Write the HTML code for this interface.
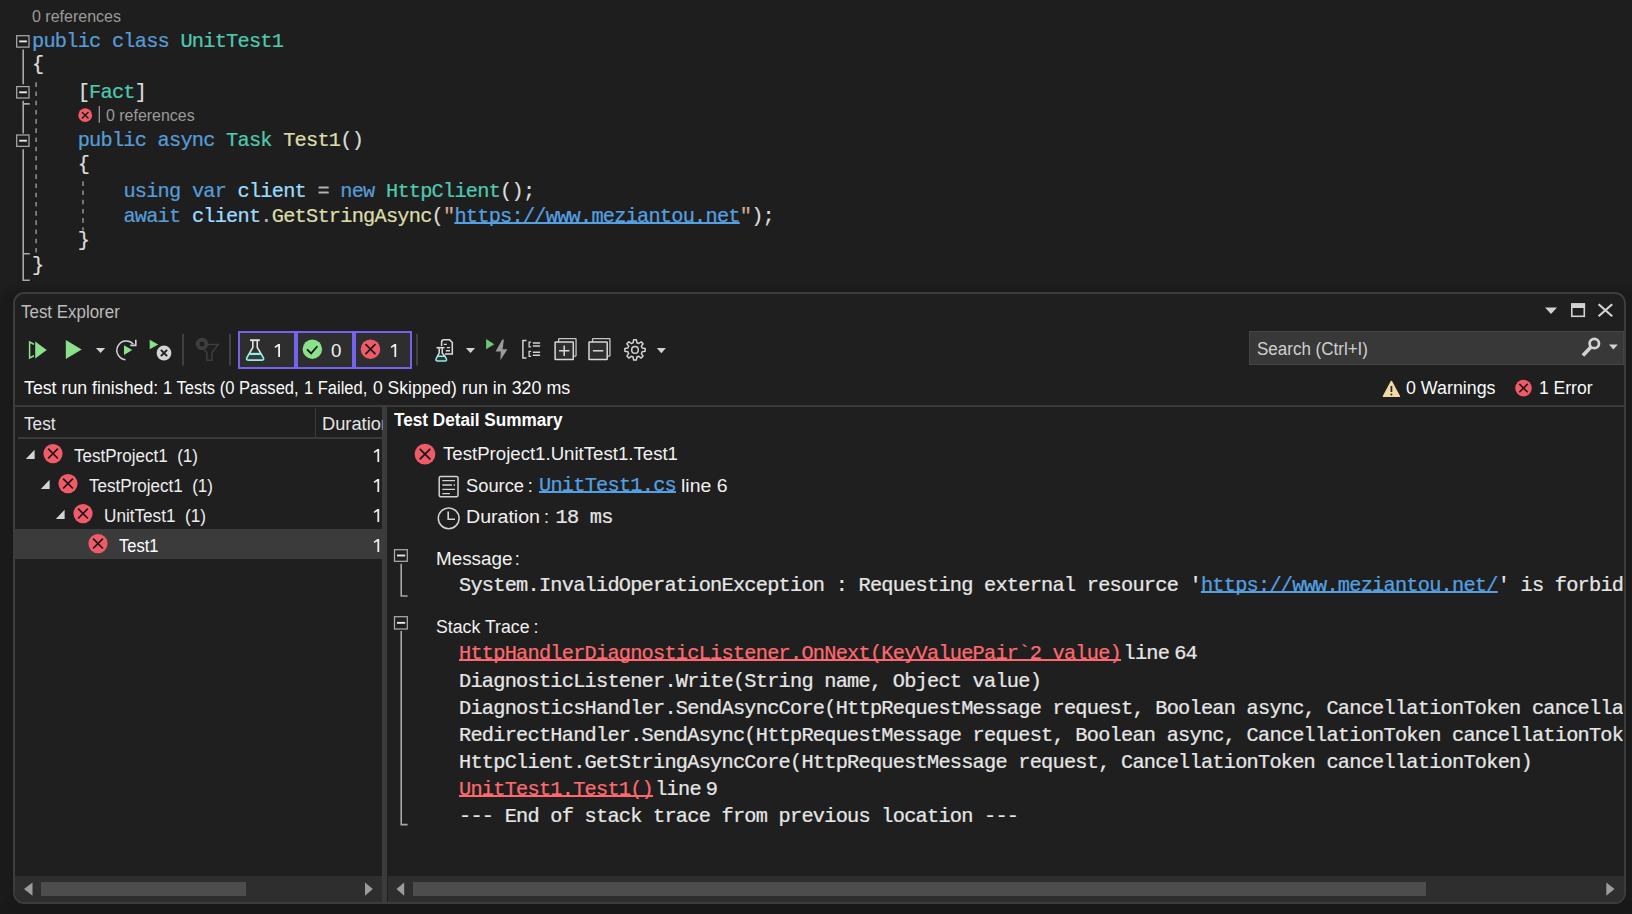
<!DOCTYPE html>
<html>
<head>
<meta charset="utf-8">
<title>Test Explorer</title>
<style>
html,body{margin:0;padding:0;}
body{width:1632px;height:914px;overflow:hidden;background:#1e1e1e;position:relative;font-family:"Liberation Sans",sans-serif;color:#f1f1f1;}
.b{position:absolute;}
.t{position:absolute;white-space:pre;line-height:1;transform-origin:0 50%;}
.mono{-webkit-text-stroke:0.24px currentColor;letter-spacing:-0.757px;}
.mono{font-family:"Liberation Mono",monospace;}
.sans{font-family:"Liberation Sans",sans-serif;}
.kw{color:#569cd6;}
.ty{color:#4ec9b0;}
.fn{color:#dcdcaa;}
.id{color:#9cdcfe;}
.op{color:#b4b4b4;}
.st{color:#d6a98a;}
.u{text-decoration:underline;text-decoration-thickness:1.6px;text-underline-offset:-0.4px;text-decoration-skip-ink:none;}
.lk{color:#55a0e0;}
.rd{color:#fc6a70;}
svg{position:absolute;left:0;top:0;}
</style>
</head>
<body>
<div class="b" style="left:0px;top:296px;width:1632px;height:618px;background:#1b1b1b;box-shadow:0 0 5px 3px #1b1b1b;"></div>
<div class="b" style="left:0px;top:906px;width:1632px;height:8px;background:#191919;box-shadow:0 0 3px 2px #191919;"></div>
<div class="b" style="left:13px;top:292px;width:1609px;height:608px;background:#1f1f1f;border:2px solid #3c3c3c;border-radius:11px;box-shadow:0 0 7px 2px #191919;"></div>
<div class="b" style="left:15px;top:405px;width:1609px;height:1.5px;background:#3a3a3a;"></div>
<div class="b" style="left:18px;top:437px;width:364px;height:1.5px;background:#3a3a3a;"></div>
<div class="b" style="left:314.5px;top:408px;width:1.5px;height:30px;background:#3a3a3a;"></div>
<div class="b" style="left:382px;top:405px;width:5px;height:497px;background:#3b3b3b;"></div>
<div class="b" style="left:15px;top:528.7px;width:367px;height:30px;background:#3b3b3b;"></div>
<div class="b" style="left:15px;top:876px;width:367px;height:26px;background:#2e2e2e;border-bottom-left-radius:9px;"></div>
<div class="b" style="left:41px;top:882px;width:205px;height:14px;background:#4d4d4d;"></div>
<div class="b" style="left:387.5px;top:876px;width:1236.5px;height:26px;background:#2e2e2e;border-bottom-right-radius:9px;"></div>
<div class="b" style="left:412.5px;top:882px;width:1013.5px;height:14px;background:#4d4d4d;"></div>
<div class="b" style="left:1249px;top:330.6px;width:375px;height:34px;background:#383838;border:1px solid #444;box-sizing:border-box;"></div>
<div class="b" style="left:238px;top:331px;width:53.8px;height:33.6px;background:#2e2e2e;border:2.2px solid #7463ec;"></div>
<div class="b" style="left:296px;top:331px;width:53.8px;height:33.6px;background:#2e2e2e;border:2.2px solid #7463ec;"></div>
<div class="b" style="left:354px;top:331px;width:53.8px;height:33.6px;background:#2e2e2e;border:2.2px solid #7463ec;"></div>
<div class="t sans" style="left:32.00px;top:8.00px;font-size:16.5px;color:#9a9a9a;transform:scaleX(0.9704);">0 references</div>
<div class="t mono" style="left:32.00px;top:32.00px;font-size:20.3px;color:#dcdcdc;"><span class="kw">public</span> <span class="kw">class</span> <span class="ty">UnitTest1</span></div>
<div class="t mono" style="left:32.00px;top:55.00px;font-size:20.3px;color:#dcdcdc;">{</div>
<div class="t mono" style="left:77.69px;top:83.00px;font-size:20.3px;color:#dcdcdc;">[<span class="ty">Fact</span>]</div>
<div class="t sans" style="left:106.30px;top:107.00px;font-size:16.5px;color:#9a9a9a;transform:scaleX(0.9660);">0 references</div>
<div class="t mono" style="left:77.69px;top:131.00px;font-size:20.3px;color:#dcdcdc;"><span class="kw">public</span> <span class="kw">async</span> <span class="ty">Task</span> <span class="fn">Test1</span>()</div>
<div class="t mono" style="left:77.69px;top:155.00px;font-size:20.3px;color:#dcdcdc;">{</div>
<div class="t mono" style="left:123.38px;top:182.00px;font-size:20.3px;color:#dcdcdc;"><span class="kw">using</span> <span class="kw">var</span> <span class="id">client</span> <span class="op">=</span> <span class="kw">new</span> <span class="ty">HttpClient</span>();</div>
<div class="t mono" style="left:123.38px;top:207.00px;font-size:20.3px;color:#dcdcdc;"><span class="kw">await</span> <span class="id">client</span><span class="op">.</span><span class="fn">GetStringAsync</span>(<span class="st">"</span><span class="lk u">https://www.meziantou.net</span><span class="st">"</span>);</div>
<div class="t mono" style="left:77.69px;top:231.00px;font-size:20.3px;color:#dcdcdc;">}</div>
<div class="t mono" style="left:32.00px;top:256.00px;font-size:20.3px;color:#dcdcdc;">}</div>
<div class="t sans" style="left:21.20px;top:303.00px;font-size:18px;color:#bcbcbc;transform:scaleX(0.9405);">Test Explorer</div>
<div class="t sans" style="left:24.20px;top:379.00px;font-size:18px;color:#fafafa;transform:scaleX(0.9862);">Test run finished:</div>
<div class="t sans" style="left:163.20px;top:379.00px;font-size:18px;color:#fafafa;transform:scaleX(0.9178);">1 Tests (0 Passed,</div>
<div class="t sans" style="left:304.30px;top:379.00px;font-size:18px;color:#fafafa;transform:scaleX(0.9168);">1 Failed,</div>
<div class="t sans" style="left:372.70px;top:379.00px;font-size:18px;color:#fafafa;transform:scaleX(0.9737);">0 Skipped)</div>
<div class="t sans" style="left:462.20px;top:379.00px;font-size:18px;color:#fafafa;transform:scaleX(0.9921);">run in 320 ms</div>
<div class="t sans" style="left:330.80px;top:342.00px;font-size:18px;color:#f1f1f1;transform:scaleX(1.0384);">0</div>
<div class="t sans" style="left:1257.00px;top:340.00px;font-size:18px;color:#cfcfcf;transform:scaleX(0.9444);">Search (Ctrl+I)</div>
<div class="t sans" style="left:1406.00px;top:379.00px;font-size:18px;color:#fafafa;transform:scaleX(0.9903);">0 Warnings</div>
<div class="t sans" style="left:1538.50px;top:379.00px;font-size:18px;color:#fafafa;transform:scaleX(0.9725);">1 Error</div>
<div class="t sans" style="left:24.00px;top:415.00px;font-size:18px;color:#e4e4e4;transform:scaleX(0.9541);">Test</div>
<div class="t sans" style="left:321.50px;top:415.00px;font-size:18px;color:#e4e4e4;transform:scaleX(1.0140);clip-path:inset(-5px 8.4px -5px 0);">Duration</div>
<div class="t sans" style="left:73.50px;top:447.00px;font-size:18px;color:#ededed;transform:scaleX(0.9462);">TestProject1  (1)</div>
<div class="t sans" style="left:88.50px;top:477.00px;font-size:18px;color:#ededed;transform:scaleX(0.9462);">TestProject1  (1)</div>
<div class="t sans" style="left:103.50px;top:507.00px;font-size:18px;color:#ededed;transform:scaleX(0.9529);">UnitTest1  (1)</div>
<div class="t sans" style="left:118.50px;top:537.00px;font-size:18px;color:#ffffff;transform:scaleX(0.9179);">Test1</div>
<div class="t sans" style="left:394.00px;top:411.00px;font-size:18px;color:#ffffff;font-weight:bold;transform:scaleX(0.9534);">Test Detail Summary</div>
<div class="t sans" style="left:442.50px;top:445.00px;font-size:18px;color:#f1f1f1;transform:scaleX(1.0347);">TestProject1.UnitTest1.Test1</div>
<div class="t sans" style="left:465.50px;top:477.00px;font-size:18px;color:#f1f1f1;transform:scaleX(1.0167);">Source</div>
<div class="t sans" style="left:527.80px;top:477.00px;font-size:18px;color:#f1f1f1;">:</div>
<div class="t mono" style="left:539.00px;top:476.00px;font-size:20.3px;color:#dcdcdc;"><span class="lk u">UnitTest1.cs</span></div>
<div class="t sans" style="left:680.50px;top:477.00px;font-size:18px;color:#f1f1f1;transform:scaleX(1.0806);">line 6</div>
<div class="t sans" style="left:465.50px;top:508.00px;font-size:18px;color:#f1f1f1;transform:scaleX(1.0875);">Duration</div>
<div class="t sans" style="left:544.00px;top:508.00px;font-size:18px;color:#f1f1f1;">:</div>
<div class="t mono" style="left:555.50px;top:508.00px;font-size:20.3px;color:#e6e6e6;">18 ms</div>
<div class="t sans" style="left:436.00px;top:550.00px;font-size:18px;color:#f1f1f1;transform:scaleX(1.0473);">Message</div>
<div class="t sans" style="left:514.80px;top:550.00px;font-size:18px;color:#f1f1f1;">:</div>
<div class="t sans" style="left:436.00px;top:618.00px;font-size:18px;color:#f1f1f1;transform:scaleX(0.9837);">Stack Trace</div>
<div class="t sans" style="left:533.50px;top:618.00px;font-size:18px;color:#f1f1f1;">:</div>
<div class="t mono" style="left:459.00px;top:576.00px;font-size:20.3px;color:#e6e6e6;width:1164px;overflow:hidden;">System.InvalidOperationException : Requesting external resource '<span class="lk u">https://www.meziantou.net/</span>' is forbid</div>
<div class="t mono" style="left:459.00px;top:644.00px;font-size:20.3px;color:#dcdcdc;"><span class="rd u">HttpHandlerDiagnosticListener.OnNext(KeyValuePair`2 value)</span></div>
<div class="t mono" style="left:1123.53px;top:644.00px;font-size:20.3px;color:#e6e6e6;">line</div>
<div class="t mono" style="left:1174.13px;top:644.00px;font-size:20.3px;color:#e6e6e6;">64</div>
<div class="t mono" style="left:459.00px;top:672.00px;font-size:20.3px;color:#e6e6e6;">DiagnosticListener.Write(String name, Object value)</div>
<div class="t mono" style="left:459.00px;top:699.00px;font-size:20.3px;color:#e6e6e6;width:1164px;overflow:hidden;">DiagnosticsHandler.SendAsyncCore(HttpRequestMessage request, Boolean async, CancellationToken cancellationToken)</div>
<div class="t mono" style="left:459.00px;top:726.00px;font-size:20.3px;color:#e6e6e6;width:1164px;overflow:hidden;">RedirectHandler.SendAsync(HttpRequestMessage request, Boolean async, CancellationToken cancellationToken)</div>
<div class="t mono" style="left:459.00px;top:753.00px;font-size:20.3px;color:#e6e6e6;">HttpClient.GetStringAsyncCore(HttpRequestMessage request, CancellationToken cancellationToken)</div>
<div class="t mono" style="left:459.00px;top:780.00px;font-size:20.3px;color:#dcdcdc;"><span class="rd u">UnitTest1.Test1()</span></div>
<div class="t mono" style="left:655.19px;top:780.00px;font-size:20.3px;color:#e6e6e6;">line</div>
<div class="t mono" style="left:705.78px;top:780.00px;font-size:20.3px;color:#e6e6e6;">9</div>
<div class="t mono" style="left:459.00px;top:807.00px;font-size:20.3px;color:#e6e6e6;">--- End of stack trace from previous location ---</div>
<svg width="1632" height="914" viewBox="0 0 1632 914">
<rect x="16.7" y="35.7" width="12.3" height="11.4" fill="#1e1e1e" stroke="#a8a8a8" stroke-width="1.25" rx="0"/>
<line x1="19.2" y1="41.400000000000006" x2="26.9" y2="41.400000000000006" stroke="#e6e6e6" stroke-width="1.9" />
<rect x="16.7" y="86.6" width="12.3" height="11.4" fill="#1e1e1e" stroke="#a8a8a8" stroke-width="1.25" rx="0"/>
<line x1="19.2" y1="92.3" x2="26.9" y2="92.3" stroke="#e6e6e6" stroke-width="1.9" />
<rect x="16.7" y="135.0" width="12.3" height="11.4" fill="#1e1e1e" stroke="#a8a8a8" stroke-width="1.25" rx="0"/>
<line x1="19.2" y1="140.7" x2="26.9" y2="140.7" stroke="#e6e6e6" stroke-width="1.9" />
<line x1="23.2" y1="49.6" x2="23.2" y2="84.2" stroke="#a8a8a8" stroke-width="1.6" />
<path d="M23.2,100.8 V133.4 M23.2,103.9 H29.7" stroke="#a8a8a8" stroke-width="1.6" fill="none" />
<path d="M23.2,149.2 V280.3 H29.8 M23.2,253.8 H29.8" stroke="#a8a8a8" stroke-width="1.6" fill="none" />
<line x1="36.1" y1="82.3" x2="36.1" y2="254" stroke="#929292" stroke-width="1.5" stroke-dasharray="4.6 4.6"/>
<line x1="83.0" y1="181.3" x2="83.0" y2="230.5" stroke="#929292" stroke-width="1.5" stroke-dasharray="4.6 4.6"/>
<circle cx="85.2" cy="115.2" r="6.9" fill="#f15a69" stroke="none" stroke-width="0"/>
<path d="M81.90,111.90 L88.50,118.50 M88.50,111.90 L81.90,118.50" stroke="#1a1a1a" stroke-width="1.4" fill="none" />
<line x1="99.3" y1="106" x2="99.3" y2="122.7" stroke="#9a9a9a" stroke-width="1.3" />
<polygon points="29.60,342.00 29.60,358.00 45.50,350.00" fill="none" stroke="#8be08b" stroke-width="1.5"/>
<polygon points="34.60,340.20 34.60,359.80 47.80,350.00" fill="#8be08b" stroke="#1f1f1f" stroke-width="1.2"/>
<polygon points="65.80,340.00 65.80,359.00 81.70,349.50" fill="#8be08b" />
<polygon points="95.90,348.00 105.20,348.00 100.55,353.00" fill="#d2d2d2" />
<path d="M133.29,344.11 A9.4,9.4 0 1 0 125.48,359.76" stroke="#d2d2d2" stroke-width="1.5" fill="none" />
<path d="M130.3,345.4 H135.8 V339.8" stroke="#d2d2d2" stroke-width="1.6" fill="none" />
<polygon points="124.00,345.20 124.00,355.00 132.20,350.10" fill="#8be08b" />
<polygon points="149.70,339.80 149.70,349.30 158.20,344.50" fill="#8be08b" />
<circle cx="164" cy="353" r="7.4" fill="#d4d4d4" stroke="none" stroke-width="0"/>
<path d="M160.90,349.90 L167.10,356.10 M167.10,349.90 L160.90,356.10" stroke="#1f1f1f" stroke-width="2.0" fill="none" />
<line x1="183" y1="334" x2="183" y2="365.5" stroke="#404040" stroke-width="2" />
<line x1="230" y1="334" x2="230" y2="365.5" stroke="#404040" stroke-width="2" />
<line x1="417" y1="334" x2="417" y2="365.5" stroke="#404040" stroke-width="2" />
<circle cx="202" cy="344" r="6.2" fill="#3e3e3e" stroke="none" stroke-width="0"/>
<rect x="199.8" y="341.8" width="4.4" height="4.4" fill="#1f1f1f" stroke="none" stroke-width="0" rx="0"/>
<path d="M206,344.6 H218.3 L212,352.6 V360.2 H206.8 V352.6 L204.5,349.6" stroke="#3e3e3e" stroke-width="1.5" fill="none" />
<path d="M250,340.2 H259.8" stroke="#e4e4e4" stroke-width="1.9" fill="none" />
<path d="M252.85,341 V347.5 L249.5,353.1 M257.25,341 V347.5 L260.7,353.1" stroke="#e4e4e4" stroke-width="1.6" fill="none" />
<path d="M249.5,353.1 L246.9,357.5 Q245.9,360.1 248.6,360.1 H261.6 Q264.3,360.1 263.3,357.5 L260.7,353.1" stroke="#8fefe6" stroke-width="1.7" fill="#3a3a3a" />
<path d="M249.3,353.9 H260.9" stroke="#8fefe6" stroke-width="2.2" fill="none" />
<circle cx="312.35" cy="349.15" r="9.75" fill="#8be08b" stroke="none" stroke-width="0"/>
<path d="M307,349.3 L311.1,353.4 L317.4,346.3" stroke="#151515" stroke-width="1.7" fill="none" />
<circle cx="370.45" cy="349.2" r="9.75" fill="#f15a69" stroke="none" stroke-width="0"/>
<path d="M365.45,344.20 L375.45,354.20 M375.45,344.20 L365.45,354.20" stroke="#1a1a1a" stroke-width="1.7" fill="none" />
<path d="M445,353.9 H452.3 V342.6 L449.6,339.8 H444 Q441.6,339.8 441.6,342.2 V346" stroke="#dcdcdc" stroke-width="1.5" fill="none" />
<path d="M443.8,344.4 H446.8 M446.8,347.6 H450 M445.8,350.8 H450" stroke="#dcdcdc" stroke-width="1.4" fill="none" />
<path d="M436.5,347.7 H444.5" stroke="#dcdcdc" stroke-width="1.6" fill="none" />
<path d="M439.2,348.2 V353 L437.4,356.3 M442.2,348.2 V353 L444.9,356.3" stroke="#dcdcdc" stroke-width="1.5" fill="none" />
<path d="M437.4,356.3 L436.2,358.6 Q435.2,361 437.6,361 H444.9 Q447.3,361 446.3,358.6 L444.9,356.3 Z" stroke="#8fefe6" stroke-width="1.5" fill="#333" />
<polygon points="465.90,347.90 475.10,347.90 470.50,353.10" fill="#d2d2d2" />
<polygon points="486.10,339.10 486.10,349.30 494.30,344.20" fill="#6cc777" />
<polygon points="502.30,339.40 495.60,351.50 500.80,351.50 500.40,360.30 507.40,349.30 502.60,349.30 503.90,339.40" fill="#9b9b9b" />
<path d="M526.5,340.4 H522.9 V358.1 H526.5" stroke="#d2d2d2" stroke-width="1.5" fill="none" />
<path d="M531.1,342.2 H529.1 V346.8 H531.1 M531.1,351.3 H529.1 V356.4 H531.1" stroke="#d2d2d2" stroke-width="1.3" fill="none" />
<path d="M532.8,343 H540.1 M532.8,346 H540.1 M532.8,352.2 H540.1 M532.8,355.2 H540.1" stroke="#d2d2d2" stroke-width="1.35" fill="none" />
<rect x="558.65" y="338.65" width="17.4" height="17.4" fill="none" stroke="#c4c4c4" stroke-width="1.3" rx="0.5"/>
<rect x="555.1" y="342.0" width="18.2" height="17.6" fill="#2e2e2e" stroke="#d8d8d8" stroke-width="1.5" rx="0.5"/>
<path d="M559.0,350.8 H569.4000000000001 M564.2,345.6 V356.0" stroke="#d8d8d8" stroke-width="1.5" fill="none" />
<rect x="592.55" y="338.65" width="17.4" height="17.4" fill="none" stroke="#c4c4c4" stroke-width="1.3" rx="0.5"/>
<rect x="589.0" y="342.0" width="18.2" height="17.6" fill="#2e2e2e" stroke="#d8d8d8" stroke-width="1.5" rx="0.5"/>
<path d="M592.9,350.8 H603.3000000000001" stroke="#d8d8d8" stroke-width="1.5" fill="none" />
<polygon points="645.11,348.54 645.11,351.26 642.15,351.80 641.40,353.62 643.11,356.09 641.19,358.01 638.72,356.30 636.90,357.05 636.36,360.01 633.64,360.01 633.10,357.05 631.28,356.30 628.81,358.01 626.89,356.09 628.60,353.62 627.85,351.80 624.89,351.26 624.89,348.54 627.85,348.00 628.60,346.18 626.89,343.71 628.81,341.79 631.28,343.50 633.10,342.75 633.64,339.79 636.36,339.79 636.90,342.75 638.72,343.50 641.19,341.79 643.11,343.71 641.40,346.18 642.15,348.00" fill="none" stroke="#d2d2d2" stroke-width="1.5" stroke-linejoin="round"/>
<circle cx="635.0" cy="349.9" r="3.3" fill="none" stroke="#d2d2d2" stroke-width="1.5"/>
<polygon points="656.80,348.00 665.90,348.00 661.35,353.20" fill="#d2d2d2" />
<polygon points="1545.00,307.60 1557.00,307.60 1551.00,314.00" fill="#d2d2d2" />
<rect x="1571.8" y="304.6" width="12.5" height="11.7" fill="none" stroke="#d2d2d2" stroke-width="1.6" rx="0"/>
<rect x="1571" y="303.1" width="14.1" height="4.9" fill="#d2d2d2" stroke="none" stroke-width="0" rx="0"/>
<path d="M1598.6,304.2 L1612.2,316.2 M1612.2,304.2 L1598.6,316.2" stroke="#d2d2d2" stroke-width="2.2" fill="none" />
<circle cx="1594.3" cy="343.5" r="4.7" fill="none" stroke="#d2d2d2" stroke-width="2.7"/>
<line x1="1590.8" y1="347.2" x2="1582.9" y2="355.6" stroke="#d2d2d2" stroke-width="3.6" />
<polygon points="1609.00,344.60 1617.80,344.60 1613.40,349.60" fill="#d2d2d2" />
<path d="M1391.4,381.4 L1383.4,396.4 H1399.4 Z" stroke="#f3d9a4" stroke-width="1.4" fill="#f3d9a4" stroke-linejoin="round"/>
<path d="M1391.4,386 V392" stroke="#2a2a2a" stroke-width="1.8" fill="none" />
<circle cx="1391.4" cy="394.4" r="1.0" fill="#2a2a2a" stroke="none" stroke-width="0"/>
<circle cx="1523.5" cy="388.1" r="8.3" fill="#f15a69" stroke="none" stroke-width="0"/>
<path d="M1519.30,383.90 L1527.70,392.30 M1527.70,383.90 L1519.30,392.30" stroke="#1a1a1a" stroke-width="1.6" fill="none" />
<polygon points="34.60,449.80 34.60,459.10 25.80,459.10" fill="#d4d4d4" />
<polygon points="49.60,479.80 49.60,489.10 40.80,489.10" fill="#d4d4d4" />
<polygon points="64.60,509.80 64.60,519.10 55.80,519.10" fill="#d4d4d4" />
<circle cx="53.0" cy="453.6" r="9.6" fill="#f15a69" stroke="none" stroke-width="0"/>
<path d="M48.10,448.70 L57.90,458.50 M57.90,448.70 L48.10,458.50" stroke="#1a1a1a" stroke-width="1.7" fill="none" />
<circle cx="68.0" cy="483.6" r="9.6" fill="#f15a69" stroke="none" stroke-width="0"/>
<path d="M63.10,478.70 L72.90,488.50 M72.90,478.70 L63.10,488.50" stroke="#1a1a1a" stroke-width="1.7" fill="none" />
<circle cx="83.0" cy="513.6" r="9.6" fill="#f15a69" stroke="none" stroke-width="0"/>
<path d="M78.10,508.70 L87.90,518.50 M87.90,508.70 L78.10,518.50" stroke="#1a1a1a" stroke-width="1.7" fill="none" />
<circle cx="98.0" cy="543.6" r="9.6" fill="#f15a69" stroke="none" stroke-width="0"/>
<path d="M93.10,538.70 L102.90,548.50 M102.90,538.70 L93.10,548.50" stroke="#1a1a1a" stroke-width="1.7" fill="none" />
<circle cx="425" cy="454.1" r="10.4" fill="#f15a69" stroke="none" stroke-width="0"/>
<path d="M419.70,448.80 L430.30,459.40 M430.30,448.80 L419.70,459.40" stroke="#1a1a1a" stroke-width="1.8" fill="none" />
<rect x="439.2" y="476.4" width="18.8" height="20.4" fill="none" stroke="#d2d2d2" stroke-width="1.5" rx="1.5"/>
<path d="M442.3,480.6 H455 M442.3,485 H452 M453.6,485 H455 M442.3,489.4 H455 M442.3,493.6 H450" stroke="#d2d2d2" stroke-width="1.4" fill="none" />
<circle cx="448.7" cy="518.3" r="10.4" fill="none" stroke="#d2d2d2" stroke-width="1.5"/>
<path d="M448.2,511.4 V519.3 H455" stroke="#d2d2d2" stroke-width="1.6" fill="none" />
<rect x="394.5" y="549.7" width="12.8" height="11.6" fill="#1f1f1f" stroke="#ababab" stroke-width="1.25" rx="0"/>
<line x1="397.0" y1="555.5" x2="405.2" y2="555.5" stroke="#e6e6e6" stroke-width="1.9" />
<rect x="394.5" y="616.7" width="12.8" height="12.3" fill="#1f1f1f" stroke="#ababab" stroke-width="1.25" rx="0"/>
<line x1="397.0" y1="622.85" x2="405.2" y2="622.85" stroke="#e6e6e6" stroke-width="1.9" />
<path d="M401.2,563.8 V596 H407.6" stroke="#a6a6a6" stroke-width="1.6" fill="none" />
<path d="M401.2,631 V824.6 H407.6" stroke="#a6a6a6" stroke-width="1.6" fill="none" />
<polygon points="377.40,448.90 379.20,448.90 379.20,462.10 377.40,462.10 377.40,451.20 374.30,453.10 373.70,451.80" fill="#ededed" />
<polygon points="377.40,478.90 379.20,478.90 379.20,492.10 377.40,492.10 377.40,481.20 374.30,483.10 373.70,481.80" fill="#ededed" />
<polygon points="377.40,508.90 379.20,508.90 379.20,522.10 377.40,522.10 377.40,511.20 374.30,513.10 373.70,511.80" fill="#ededed" />
<polygon points="377.40,538.90 379.20,538.90 379.20,552.10 377.40,552.10 377.40,541.20 374.30,543.10 373.70,541.80" fill="#ededed" />
<polygon points="278.20,343.90 280.00,343.90 280.00,357.10 278.20,357.10 278.20,346.20 275.10,348.10 274.50,346.80" fill="#f1f1f1" />
<polygon points="394.40,343.90 396.20,343.90 396.20,357.10 394.40,357.10 394.40,346.20 391.30,348.10 390.70,346.80" fill="#f1f1f1" />
<polygon points="24.00,889.00 32.50,882.50 32.50,895.80" fill="#9c9c9c" />
<polygon points="372.80,889.00 365.00,882.50 365.00,895.80" fill="#9c9c9c" />
<polygon points="396.50,889.00 404.20,882.50 404.20,895.80" fill="#9c9c9c" />
<polygon points="1614.50,889.00 1606.30,882.50 1606.30,895.80" fill="#9c9c9c" />
</svg>
</body>
</html>
